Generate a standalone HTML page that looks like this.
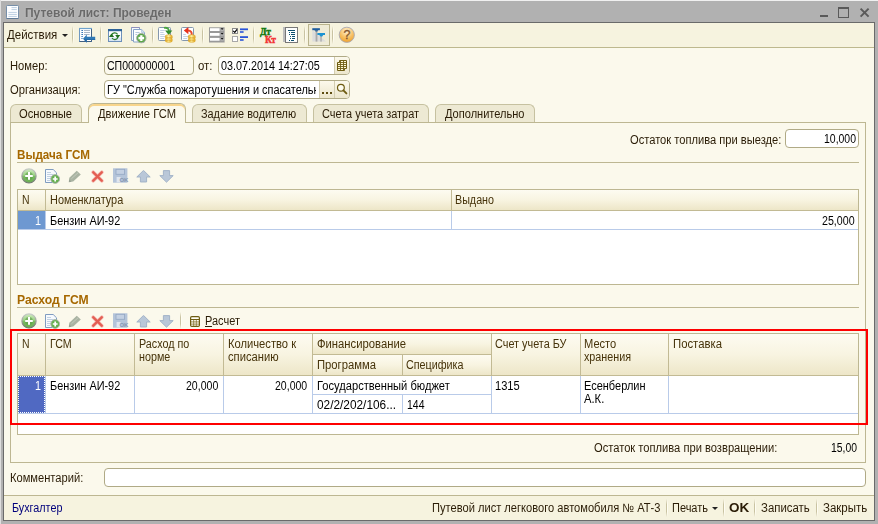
<!DOCTYPE html>
<html><head><meta charset="utf-8">
<style>
*{box-sizing:border-box;margin:0;padding:0}
html,body{width:878px;height:524px;overflow:hidden}
body{position:relative;background:#b1b1b1;font-family:"Liberation Sans",sans-serif;font-size:12px;color:#000}
.a{position:absolute}
.t{position:absolute;white-space:nowrap;line-height:14px;height:14px}
.inp{position:absolute;background:#fff;border:1px solid #b0aa86;border-radius:4px}
.tab{position:absolute;top:104px;height:18px;background:#ede9d3;border:1px solid #c6c1a0;border-bottom:none;border-radius:6px 6px 0 0}
.hd{position:absolute;background:linear-gradient(#fdfbf1 0%,#f8f4e1 50%,#ede6c8 100%)}
.hl{position:absolute;background:#c2ba94}
.bl{position:absolute;background:#b9cbe9}
.ln{position:absolute;background:#bdb792}
.vs{position:absolute;width:2px;background:linear-gradient(to right,#c9c3a2 50%,#fffdf2 50%);-webkit-mask-image:linear-gradient(transparent,#000 30%,#000 70%,transparent);mask-image:linear-gradient(transparent,#000 30%,#000 70%,transparent)}
</style></head><body>
<!-- outer frame -->
<div class="a" style="left:0;top:0;width:878px;height:1px;background:#f0f0f0"></div>
<div class="a" style="left:0;top:0;width:1px;height:524px;background:#dedede"></div>
<div class="a" style="left:3px;top:22px;width:872px;height:499px;background:#6a6a6a"></div>
<div class="a" style="left:4px;top:23px;width:870px;height:497px;background:#fbf9ec"></div>
<div class="a" style="left:4px;top:23px;width:870px;height:24px;background:#f6f3df"></div>
<div class="ln" style="left:4px;top:47px;width:870px;height:1px;background:#bdb88e"></div>
<!-- title icon -->
<svg class="a" style="left:6px;top:5px" width="13" height="14" viewBox="0 0 13 14"><rect x="0.5" y="0.5" width="12" height="13" rx="0.8" fill="#fdfeff" stroke="#7790aa"/><path d="M0.5 13.5h12" stroke="#5f7a96"/><g stroke="#bccfe2" stroke-width="1"><line x1="5.5" y1="2.6" x2="10.8" y2="2.6"/><line x1="5.5" y1="4.6" x2="10.8" y2="4.6"/><line x1="2.4" y1="7.4" x2="10.8" y2="7.4"/><line x1="2.4" y1="9.4" x2="10.8" y2="9.4"/><line x1="2.4" y1="11.4" x2="10.8" y2="11.4"/></g></svg>
<!-- window controls -->
<div class="a" style="left:820px;top:15px;width:8px;height:2px;background:#5a5a5a"></div>
<div class="a" style="left:838px;top:7px;width:11px;height:11px;border:1px solid #5a5a5a;border-top-width:2px"></div>
<svg class="a" style="left:859px;top:7px" width="11" height="11" viewBox="0 0 11 11"><path d="M1.6 1.6 L9.6 9.6 M9.6 1.6 L1.6 9.6" stroke="#5a5a5a" stroke-width="2" fill="none"/></svg>
<!-- toolbar arrow & separators -->
<div class="a" style="left:62px;top:34px;width:0;height:0;border-left:3px solid transparent;border-right:3px solid transparent;border-top:3px solid #222"></div>
<div class="vs" style="left:72px;top:26px;height:18px"></div>
<div class="vs" style="left:100px;top:26px;height:18px"></div>
<div class="vs" style="left:152px;top:26px;height:18px"></div>
<div class="vs" style="left:202px;top:26px;height:18px"></div>
<div class="vs" style="left:253px;top:26px;height:18px"></div>
<div class="vs" style="left:304px;top:26px;height:18px"></div>
<div class="vs" style="left:332px;top:26px;height:18px"></div>
<!-- inputs -->
<div class="inp" style="left:104px;top:56px;width:90px;height:19px;background:#fbf9ee"></div>
<div class="inp" style="left:218px;top:56px;width:132px;height:19px"></div>
<div class="inp" style="left:104px;top:80px;width:246px;height:19px"></div>
<!-- tabs -->
<div class="tab" style="left:10px;width:72px"></div>
<div class="tab" style="left:192px;width:115px"></div>
<div class="tab" style="left:313px;width:116px"></div>
<div class="tab" style="left:435px;width:100px"></div>
<!-- panel -->
<div class="a" style="left:10px;top:122px;width:856px;height:341px;border:1px solid #bdb792;background:#fbf9ec"></div>
<div class="tab" style="left:88px;top:103px;width:98px;height:20px;background:#fbf9ec;border-color:#bdb792;box-shadow:inset 0 2px 0 #f8d58c"></div>
<!-- ostatok input -->
<div class="inp" style="left:785px;top:129px;width:74px;height:19px"></div>
<!-- section lines -->
<div class="ln" style="left:17px;top:162px;width:842px;height:1px"></div>
<div class="ln" style="left:17px;top:307px;width:842px;height:1px"></div>
<!-- table 1 -->
<div class="a" style="left:17px;top:189px;width:842px;height:96px;background:#fff;border:1px solid #bdb792"></div>
<div class="hd" style="left:18px;top:190px;width:840px;height:20px"></div>
<div class="hl" style="left:18px;top:210px;width:840px;height:1px"></div>
<div class="hl" style="left:45px;top:190px;width:1px;height:21px"></div>
<div class="hl" style="left:451px;top:190px;width:1px;height:21px"></div>
<div class="a" style="left:18px;top:211px;width:27px;height:18px;background:#6e98d1"></div>
<div class="bl" style="left:45px;top:211px;width:1px;height:18px"></div>
<div class="bl" style="left:451px;top:211px;width:1px;height:18px"></div>
<div class="bl" style="left:18px;top:229px;width:840px;height:1px"></div>
<!-- table 2 -->
<div class="a" style="left:17px;top:333px;width:842px;height:102px;background:#fff;border:1px solid #bdb792"></div>
<div class="hd" style="left:18px;top:334px;width:840px;height:41px"></div>
<div class="hd" style="left:312px;top:334px;width:179px;height:20px"></div>
<div class="hd" style="left:312px;top:355px;width:179px;height:20px"></div>
<div class="hl" style="left:18px;top:375px;width:840px;height:1px"></div>
<div class="hl" style="left:312px;top:354px;width:180px;height:1px"></div>
<div class="hl" style="left:45px;top:334px;width:1px;height:42px"></div>
<div class="hl" style="left:134px;top:334px;width:1px;height:42px"></div>
<div class="hl" style="left:223px;top:334px;width:1px;height:42px"></div>
<div class="hl" style="left:312px;top:334px;width:1px;height:42px"></div>
<div class="hl" style="left:402px;top:355px;width:1px;height:21px"></div>
<div class="hl" style="left:491px;top:334px;width:1px;height:42px"></div>
<div class="hl" style="left:580px;top:334px;width:1px;height:42px"></div>
<div class="hl" style="left:668px;top:334px;width:1px;height:42px"></div>
<div class="bl" style="left:45px;top:376px;width:1px;height:37px"></div>
<div class="bl" style="left:134px;top:376px;width:1px;height:37px"></div>
<div class="bl" style="left:223px;top:376px;width:1px;height:37px"></div>
<div class="bl" style="left:312px;top:376px;width:1px;height:37px"></div>
<div class="bl" style="left:402px;top:395px;width:1px;height:18px"></div>
<div class="bl" style="left:491px;top:376px;width:1px;height:37px"></div>
<div class="bl" style="left:580px;top:376px;width:1px;height:37px"></div>
<div class="bl" style="left:668px;top:376px;width:1px;height:37px"></div>
<div class="bl" style="left:312px;top:394px;width:180px;height:1px"></div>
<div class="bl" style="left:18px;top:413px;width:840px;height:1px"></div>
<div class="a" style="left:18px;top:376px;width:27px;height:37px;background:#5069c2;border:1px dotted #fff"></div>
<!-- red rect -->
<div class="a" style="left:10px;top:329px;width:858px;height:96px;border:2px solid #fe0000"></div>
<!-- comment -->
<div class="inp" style="left:104px;top:468px;width:762px;height:19px"></div>
<!-- bottom bar -->
<div class="a" style="left:4px;top:496px;width:870px;height:24px;background:#f6f3df"></div>
<div class="ln" style="left:4px;top:495px;width:870px;height:1px"></div>
<div class="vs" style="left:666px;top:499px;height:18px"></div>
<div class="vs" style="left:723px;top:499px;height:18px"></div>
<div class="vs" style="left:754px;top:499px;height:18px"></div>
<div class="vs" style="left:816px;top:499px;height:18px"></div>
<div class="a" style="left:712px;top:507px;width:0;height:0;border-left:3px solid transparent;border-right:3px solid transparent;border-top:3px solid #222"></div>
<!-- toolbar icons -->
<svg class="a" style="left:78px;top:27px" width="18" height="17" viewBox="0 0 18 17">
<rect x="1.5" y="1.5" width="12" height="13" fill="#fdfeff" stroke="#6f98c2"/>
<path d="M13.5 2 V14.5 H1.5" stroke="#3f5f82" fill="none"/>
<path d="M1 1.5 H14" stroke="#6ea2cc" stroke-width="1.2"/>
<path d="M3.4 3.5h1.6M3.4 5.5h1.6M3.4 7.5h1.6M3.4 9.5h1.4M3.4 11.5h1.2" stroke="#3b78b8"/>
<path d="M6 3.5h6M6 5.5h6M6 7.5h5.6" stroke="#a9b6c6"/>
<path d="M5 11.7 L8.8 7.6 V9.8 H17.2 V13.1 H8.8 V15.8 Z" fill="#2f79b6"/>
<path d="M8.8 12.2 H17.2 V13.1 H8.8 V15.8 L5.6 12.2 Z" fill="#1f5f9c" opacity="0.7"/>
</svg>
<svg class="a" style="left:108px;top:28px" width="15" height="15" viewBox="0 0 15 15">
<rect x="0.5" y="1.5" width="13" height="12" fill="#fbfdff" stroke="#6d90ba"/>
<rect x="1" y="9.5" width="12" height="3.5" fill="#d9e6f4"/>
<rect x="0" y="1" width="14" height="2.2" fill="#2e6398"/>
<path d="M3.6 7.2 A3.3 3.3 0 0 1 9.6 6.4" stroke="#2b7d2b" stroke-width="1.2" fill="none"/>
<path d="M9.8 9.6 A3.3 3.3 0 0 1 4 10" stroke="#2b7d2b" stroke-width="1.2" fill="none"/>
<path d="M0.9 8.9 L3.5 5.4 L6.1 8.9 Z" fill="#1f701f"/>
<path d="M7.2 6.9 L12.2 6.9 L9.7 10.4 Z" fill="#1f701f"/>
</svg>
<svg class="a" style="left:130px;top:26px" width="18" height="18" viewBox="0 0 18 18">
<path d="M1.5 1.5 H9.5 V14.5 H1.5 Z" fill="#f6f9fd" stroke="#8aa0c4"/>
<path d="M1.5 1.5 H9.5" stroke="#8f8fbb"/>
<path d="M3.5 3.5 H11.6 L14.5 6.4 V16 H3.5 Z" fill="#fdfeff" stroke="#86a3c8"/>
<path d="M11.6 3.5 V6.4 H14.5" fill="#dbe7f4" stroke="#a9c0dc" stroke-width="0.8"/>
<path d="M5.4 6.5h4.2M5.4 8.5h1.6" stroke="#b4c6dc"/>
<circle cx="11.3" cy="12.1" r="4.7" fill="#58a444" stroke="#a4b0a4" stroke-width="1"/>
<circle cx="11.3" cy="12.1" r="3.2" fill="#8cc878" opacity="0.55"/>
<path d="M8.5 12.1h5.6M11.3 9.3v5.6" stroke="#fff" stroke-width="2.2"/>
</svg>
<svg class="a" style="left:157px;top:26px" width="17" height="18" viewBox="0 0 17 18">
<defs><linearGradient id="cg" x1="0" x2="1" y1="0" y2="0"><stop offset="0" stop-color="#e6ae28"/><stop offset="0.45" stop-color="#fff2a2"/><stop offset="1" stop-color="#e4a820"/></linearGradient></defs>
<rect x="1.5" y="1.5" width="12" height="13" rx="1" fill="#fdfeff" stroke="#8497ae"/>
<path d="M3.2 4.5h4.6M3.2 6.5h3.4M3.2 8.5h4.4M3.2 10.5h5M3.2 12.5h4" stroke="#c3d1e2"/>
<path d="M7 1.9 C10.6 1.3 11.9 3 11.9 5" stroke="#4aa440" stroke-width="1.9" fill="none"/>
<path d="M8.1 4.6 H15.3 L11.7 8.9 Z" fill="#2f8c2c"/>
<g fill="url(#cg)" stroke="#d9a01c" stroke-width="0.6">
<ellipse cx="11.8" cy="14.8" rx="3.5" ry="1.5"/><ellipse cx="11.8" cy="13.2" rx="3.5" ry="1.5"/><ellipse cx="11.8" cy="11.6" rx="3.5" ry="1.5"/><ellipse cx="11.8" cy="10.2" rx="3.5" ry="1.5"/></g>
</svg>
<svg class="a" style="left:180px;top:26px" width="17" height="18" viewBox="0 0 17 18">
<rect x="1.5" y="1.5" width="12" height="13" rx="1" fill="#fdfeff" stroke="#8497ae"/>
<path d="M3.2 8.5h2.6M3.2 10.5h5M3.2 12.5h4" stroke="#c3d1e2"/>
<path d="M11.6 9.6 C12.4 6.2 10.8 4.5 7.8 4.6" stroke="#ea4a2e" stroke-width="2" fill="none"/>
<path d="M8.4 0.9 V8.2 L3.8 4.5 Z" fill="#e8321c"/>
<g fill="url(#cg)" stroke="#d9a01c" stroke-width="0.6">
<ellipse cx="11.8" cy="14.8" rx="3.5" ry="1.5"/><ellipse cx="11.8" cy="13.2" rx="3.5" ry="1.5"/><ellipse cx="11.8" cy="11.6" rx="3.5" ry="1.5"/><ellipse cx="11.8" cy="10.2" rx="3.5" ry="1.5"/></g>
</svg>
<svg class="a" style="left:209px;top:27px" width="16" height="16" viewBox="0 0 16 16">
<rect x="0" y="0.3" width="15.6" height="15.2" fill="#999"/>
<g fill="#fff"><rect x="1" y="1.2" width="9.6" height="2.8"/><rect x="1" y="6" width="9.6" height="2.8"/><rect x="1" y="10.9" width="9.6" height="2.8"/></g>
<g fill="#b4b4b4"><rect x="11.4" y="1.2" width="3.4" height="2.8"/><rect x="11.4" y="6" width="3.4" height="2.8"/><rect x="11.4" y="10.9" width="3.4" height="2.8"/></g>
<path d="M11.7 1.3 h2.8 l-1.4 1.7z M11.7 6.1 h2.8 l-1.4 1.7z M11.7 11 h2.8 l-1.4 1.7z" fill="#111"/>
</svg>
<svg class="a" style="left:232px;top:28px" width="17" height="14" viewBox="0 0 17 14">
<rect x="0.5" y="0.5" width="5" height="5" fill="#fff" stroke="#8a8a8a"/>
<path d="M1.2 2.8 L2.8 4.4 L5 1.4" stroke="#000" stroke-width="1.2" fill="none"/>
<rect x="0.5" y="8.5" width="5" height="5" fill="#fff" stroke="#a8a8a8"/>
<g fill="#2a55d8"><rect x="8" y="0.4" width="8" height="1.8"/><rect x="8" y="3.2" width="3.6" height="1.6"/><rect x="8" y="8.2" width="8" height="1.8"/><rect x="8" y="11.2" width="3.6" height="1.6"/></g>
</svg>
<div class="a" style="left:260px;top:26.5px;font:bold 9.5px/10px 'Liberation Serif',serif;color:#0f780f;letter-spacing:-0.3px;-webkit-text-stroke:0.45px #0f780f">Дт</div>
<div class="a" style="left:265px;top:35px;font:bold 9.5px/10px 'Liberation Serif',serif;color:#f23434;letter-spacing:-0.5px;-webkit-text-stroke:0.45px #f23434">Кт</div>
<svg class="a" style="left:283px;top:26px" width="16" height="17" viewBox="0 0 16 17">
<rect x="0" y="1" width="3" height="15" fill="#bdbdbd"/>
<rect x="2.5" y="1.5" width="12" height="15" fill="#fdfefe" stroke="#777"/>
<path d="M5 4.5h7M6 6.5h1M8 6.5h4M6 8.5h1M8 8.5h4M7 10.5h1M9 10.5h3M7 12.5h1M9 12.5h3M6 14.5h1M8 14.5h3" stroke="#0d4f6e" stroke-width="1.1"/>
</svg>
<div class="a" style="left:308px;top:24px;width:22px;height:22px;background:#efebd7;border:1px solid #b9b38d"></div>
<svg class="a" style="left:311px;top:27px" width="16" height="16" viewBox="0 0 16 16">
<path d="M1.3 3 L15 14.6 H1.3 Z" fill="#dcdcdc"/>
<rect x="4.6" y="3" width="1.8" height="11.6" fill="#a9a9a9"/>
<rect x="9.2" y="8" width="1.7" height="6.6" fill="#b5b5b5"/>
<rect x="1.3" y="1.2" width="7.6" height="2" fill="#1e5c9e"/>
<path d="M3.3 3.2h4l-1 1.4h-1.7z" fill="#1e5c9e"/>
<rect x="6.4" y="6" width="7.6" height="2" fill="#1c92d2"/>
<path d="M8.2 8h4l-1 1.4h-1.7z" fill="#1c92d2"/>
</svg>
<svg class="a" style="left:338px;top:26px" width="18" height="18" viewBox="0 0 18 18">
<defs><radialGradient id="hg" cx="0.5" cy="0.25" r="0.8"><stop offset="0" stop-color="#fff3d6"/><stop offset="0.55" stop-color="#f7c064"/><stop offset="1" stop-color="#ee9c22"/></radialGradient></defs>
<circle cx="8.8" cy="8.8" r="7.6" fill="url(#hg)" stroke="#a9a9b4" stroke-width="0.9"/>
<text x="8.9" y="13.2" text-anchor="middle" font-family="Liberation Sans" font-size="12.5" fill="#86552a" stroke="#86552a" stroke-width="0.3">?</text>
</svg>
<!-- calendar / ... / search buttons -->
<div class="a" style="left:334px;top:57px;width:15px;height:17px;background:linear-gradient(#fcf9ec,#ece6cd);border-left:1px solid #d3cdb0;border-radius:0 3px 3px 0"></div>
<svg class="a" style="left:337px;top:60px" width="10" height="11" viewBox="0 0 10 11">
<path d="M2.5 0.5h7v8h-2v2h-7v-8h2z" fill="#fff8d8" stroke="#6e5c12"/>
<path d="M0.5 4.5h9M0.5 6.5h9M0.5 8.5h7M2.5 2.5h7M3.5 0.5v10M6.5 0.5v10" stroke="#6e5c12" stroke-width="0.9"/>
</svg>
<div class="a" style="left:319px;top:81px;width:30px;height:17px;background:linear-gradient(#fcf9ec,#ece6cd);border-left:1px solid #d3cdb0;border-radius:0 3px 3px 0"></div>
<div class="a" style="left:334px;top:81px;width:1px;height:17px;background:#d3cdb0"></div>
<div class="a" style="left:322px;top:92px;width:2px;height:2px;background:#5d4c10;box-shadow:4px 0 0 #5d4c10,8px 0 0 #5d4c10"></div>
<svg class="a" style="left:336px;top:83px" width="13" height="13" viewBox="0 0 13 13">
<circle cx="4.9" cy="4.8" r="3.4" fill="#fffdf0" stroke="#6e5c12" stroke-width="1.2"/>
<path d="M7.4 7.4 L10.4 10.4" stroke="#6e5c12" stroke-width="1.9" stroke-linecap="round"/>
</svg>

<svg class="a" style="left:21px;top:168px" width="16" height="16" viewBox="0 0 16 16">
<defs><linearGradient id="gg0" x1="0" y1="0" x2="0" y2="1"><stop offset="0" stop-color="#d2edc3"/><stop offset="0.45" stop-color="#9bd085"/><stop offset="0.55" stop-color="#7aba62"/><stop offset="1" stop-color="#69ad52"/></linearGradient><linearGradient id="gs0" x1="0" y1="0" x2="0" y2="1"><stop offset="0" stop-color="#c9cdc9"/><stop offset="1" stop-color="#6f746f"/></linearGradient></defs>
<circle cx="8" cy="7.9" r="7.1" fill="url(#gg0)" stroke="url(#gs0)" stroke-width="1.2"/>
<circle cx="8" cy="7.9" r="3.9" fill="#5c9f44" opacity="0.6"/>
<path d="M4.2 7.9h7.6M8 4.1v7.6" stroke="#fff" stroke-width="2"/>
</svg>
<svg class="a" style="left:44px;top:169px" width="17" height="15" viewBox="0 0 17 15">
<path d="M1.5 0.5 H9.2 L12.5 3.8 V13.5 H1.5 Z" fill="#f7fafd" stroke="#7f9cc0"/>
<path d="M3 3.5h4M3 5.5h6M3 7.5h5M3 9.5h4M3 11.5h3" stroke="#c0d0e2"/>
<circle cx="11.2" cy="10" r="4.4" fill="#66b050" stroke="#adb6ad" stroke-width="1"/>
<path d="M8.8 10h4.8M11.2 7.6v4.8" stroke="#fff" stroke-width="1.7"/>
</svg>
<svg class="a" style="left:68px;top:170px" width="14" height="13" viewBox="0 0 14 13">
<path d="M1 12 L1.3 7.8 L8.8 0.8 L12.8 4.6 L5.2 11.6 Z" fill="#a9b3a2"/>
<path d="M3.4 8.8 L10 2.8" stroke="#c3cbbd" stroke-width="1"/><path d="M0.8 12.2 L1.1 9.2 L3.6 11.8 Z" fill="#98a294"/>
</svg>
<svg class="a" style="left:91px;top:170px" width="13" height="13" viewBox="0 0 13 13">
<path d="M2.2 2.2 L10.8 10.8 M10.8 2.2 L2.2 10.8" stroke="#f3b4ac" stroke-width="3.6" stroke-linecap="round"/>
<path d="M2.2 2.2 L10.8 10.8 M10.8 2.2 L2.2 10.8" stroke="#e35e52" stroke-width="2.3" stroke-linecap="round"/>
</svg>
<svg class="a" style="left:113px;top:168px" width="16" height="15" viewBox="0 0 16 15">
<rect x="0" y="0.3" width="14.4" height="14.4" fill="#b4c4d9"/>
<rect x="3" y="1.3" width="8.6" height="5" fill="#c3d0e2" stroke="#93a7c4" stroke-width="0.8"/>
<rect x="3.6" y="9" width="4" height="5.4" fill="#dfe6ef"/>
<text x="6.6" y="14.2" font-family="Liberation Sans" font-weight="bold" font-size="6" fill="#8798b2" letter-spacing="-0.3">OK</text>
</svg>
<svg class="a" style="left:136px;top:170px" width="15" height="13" viewBox="0 0 15 13">
<path d="M7.5 0.4 L14.2 7 H10.6 V12 H4.4 V7 H0.8 Z" fill="#b9c7d8" stroke="#9dafc5" stroke-width="0.9"/>
</svg>
<svg class="a" style="left:159px;top:170px" width="15" height="13" viewBox="0 0 15 13">
<path d="M7.5 12.2 L14.2 5.6 H10.6 V0.6 H4.4 V5.6 H0.8 Z" fill="#b9c7d8" stroke="#9dafc5" stroke-width="0.9"/>
</svg>

<svg class="a" style="left:21px;top:313px" width="16" height="16" viewBox="0 0 16 16">
<defs><linearGradient id="gg145" x1="0" y1="0" x2="0" y2="1"><stop offset="0" stop-color="#d2edc3"/><stop offset="0.45" stop-color="#9bd085"/><stop offset="0.55" stop-color="#7aba62"/><stop offset="1" stop-color="#69ad52"/></linearGradient><linearGradient id="gs145" x1="0" y1="0" x2="0" y2="1"><stop offset="0" stop-color="#c9cdc9"/><stop offset="1" stop-color="#6f746f"/></linearGradient></defs>
<circle cx="8" cy="7.9" r="7.1" fill="url(#gg145)" stroke="url(#gs145)" stroke-width="1.2"/>
<circle cx="8" cy="7.9" r="3.9" fill="#5c9f44" opacity="0.6"/>
<path d="M4.2 7.9h7.6M8 4.1v7.6" stroke="#fff" stroke-width="2"/>
</svg>
<svg class="a" style="left:44px;top:314px" width="17" height="15" viewBox="0 0 17 15">
<path d="M1.5 0.5 H9.2 L12.5 3.8 V13.5 H1.5 Z" fill="#f7fafd" stroke="#7f9cc0"/>
<path d="M3 3.5h4M3 5.5h6M3 7.5h5M3 9.5h4M3 11.5h3" stroke="#c0d0e2"/>
<circle cx="11.2" cy="10" r="4.4" fill="#66b050" stroke="#adb6ad" stroke-width="1"/>
<path d="M8.8 10h4.8M11.2 7.6v4.8" stroke="#fff" stroke-width="1.7"/>
</svg>
<svg class="a" style="left:68px;top:315px" width="14" height="13" viewBox="0 0 14 13">
<path d="M1 12 L1.3 7.8 L8.8 0.8 L12.8 4.6 L5.2 11.6 Z" fill="#a9b3a2"/>
<path d="M3.4 8.8 L10 2.8" stroke="#c3cbbd" stroke-width="1"/><path d="M0.8 12.2 L1.1 9.2 L3.6 11.8 Z" fill="#98a294"/>
</svg>
<svg class="a" style="left:91px;top:315px" width="13" height="13" viewBox="0 0 13 13">
<path d="M2.2 2.2 L10.8 10.8 M10.8 2.2 L2.2 10.8" stroke="#f3b4ac" stroke-width="3.6" stroke-linecap="round"/>
<path d="M2.2 2.2 L10.8 10.8 M10.8 2.2 L2.2 10.8" stroke="#e35e52" stroke-width="2.3" stroke-linecap="round"/>
</svg>
<svg class="a" style="left:113px;top:313px" width="16" height="15" viewBox="0 0 16 15">
<rect x="0" y="0.3" width="14.4" height="14.4" fill="#b4c4d9"/>
<rect x="3" y="1.3" width="8.6" height="5" fill="#c3d0e2" stroke="#93a7c4" stroke-width="0.8"/>
<rect x="3.6" y="9" width="4" height="5.4" fill="#dfe6ef"/>
<text x="6.6" y="14.2" font-family="Liberation Sans" font-weight="bold" font-size="6" fill="#8798b2" letter-spacing="-0.3">OK</text>
</svg>
<svg class="a" style="left:136px;top:315px" width="15" height="13" viewBox="0 0 15 13">
<path d="M7.5 0.4 L14.2 7 H10.6 V12 H4.4 V7 H0.8 Z" fill="#b9c7d8" stroke="#9dafc5" stroke-width="0.9"/>
</svg>
<svg class="a" style="left:159px;top:315px" width="15" height="13" viewBox="0 0 15 13">
<path d="M7.5 12.2 L14.2 5.6 H10.6 V0.6 H4.4 V5.6 H0.8 Z" fill="#b9c7d8" stroke="#9dafc5" stroke-width="0.9"/>
</svg>
<div class="vs" style="left:180px;top:312px;height:17px"></div>
<svg class="a" style="left:190px;top:316px" width="10" height="11" viewBox="0 0 10 11"><rect x="0.6" y="0.6" width="8.8" height="9.8" rx="1.2" fill="#fffef6" stroke="#6e5c12" stroke-width="1.2"/><path d="M1 3.5h8" stroke="#6e5c12" stroke-width="1"/><path d="M1 5.9h8M1 8.1h8M3.7 3.5v7M6.3 3.5v7" stroke="#7d6b22" stroke-width="0.75"/></svg>
<!-- texts -->
<div class="t" style="left:24.95px;top:6.00px;font-weight:bold;color:#6a6a6a;text-shadow:0 0 2px #c8c8c8;"><span style="display:inline-block;transform-origin:0 0;transform:scaleX(0.9976);letter-spacing:0.00px;">Путевой лист: Проведен</span></div>
<div class="t" style="left:7.45px;top:28.00px;color:#2a1c06;"><span style="display:inline-block;transform-origin:0 0;transform:scaleX(0.9558);letter-spacing:0.00px;">Действия</span></div>
<div class="t" style="left:9.70px;top:59.00px;color:#2a1c06;"><span style="display:inline-block;transform-origin:0 0;transform:scaleX(0.9312);letter-spacing:0.00px;">Номер:</span></div>
<div class="t" style="left:107.00px;top:59.00px;"><span style="display:inline-block;transform-origin:0 0;transform:scaleX(0.8791);letter-spacing:0.00px;">СП000000001</span></div>
<div class="t" style="left:198.20px;top:59.00px;color:#2a1c06;"><span style="display:inline-block;transform-origin:0 0;transform:scaleX(0.9514);letter-spacing:0.00px;">от:</span></div>
<div class="t" style="left:220.90px;top:59.00px;"><span style="display:inline-block;transform-origin:0 0;transform:scaleX(0.8973);letter-spacing:0.00px;">03.07.2014 14:27:05</span></div>
<div class="t" style="left:9.70px;top:83.00px;color:#2a1c06;"><span style="display:inline-block;transform-origin:0 0;transform:scaleX(0.9325);letter-spacing:0.00px;">Организация:</span></div>
<div class="t" style="left:106.70px;top:83.00px;width:209.80px;overflow:hidden;"><span style="display:inline-block;transform-origin:0 0;transform:scaleX(0.9107);letter-spacing:0.00px;">ГУ &quot;Служба пожаротушения и спасательн</span></div>
<div class="t" style="left:18.60px;top:107.00px;color:#2a1c06;"><span style="display:inline-block;transform-origin:0 0;transform:scaleX(0.9326);letter-spacing:0.00px;">Основные</span></div>
<div class="t" style="left:98.10px;top:107.00px;color:#2a1c06;"><span style="display:inline-block;transform-origin:0 0;transform:scaleX(0.9316);letter-spacing:0.00px;">Движение ГСМ</span></div>
<div class="t" style="left:201.40px;top:107.00px;color:#2a1c06;"><span style="display:inline-block;transform-origin:0 0;transform:scaleX(0.9063);letter-spacing:0.00px;">Задание водителю</span></div>
<div class="t" style="left:322.20px;top:107.00px;color:#2a1c06;"><span style="display:inline-block;transform-origin:0 0;transform:scaleX(0.9124);letter-spacing:0.00px;">Счета учета затрат</span></div>
<div class="t" style="left:445.40px;top:107.00px;color:#2a1c06;"><span style="display:inline-block;transform-origin:0 0;transform:scaleX(0.9205);letter-spacing:0.00px;">Дополнительно</span></div>
<div class="t" style="left:630.00px;top:133.00px;color:#2a1c06;"><span style="display:inline-block;transform-origin:0 0;transform:scaleX(0.9278);letter-spacing:0.00px;">Остаток топлива при выезде:</span></div>
<div class="t" style="left:823.50px;top:132.00px;"><span style="display:inline-block;transform-origin:0 0;transform:scaleX(0.8719);letter-spacing:0.00px;">10,000</span></div>
<div class="t" style="left:16.70px;top:148.00px;font-weight:bold;color:#a66800;"><span style="display:inline-block;transform-origin:0 0;transform:scaleX(0.9730);letter-spacing:0.00px;">Выдача ГСМ</span></div>
<div class="t" style="left:21.90px;top:193.00px;color:#46330a;"><span style="display:inline-block;transform-origin:0 0;transform:scaleX(0.8700);letter-spacing:0.00px;">N</span></div>
<div class="t" style="left:49.95px;top:193.00px;color:#46330a;"><span style="display:inline-block;transform-origin:0 0;transform:scaleX(0.9096);letter-spacing:0.00px;">Номенклатура</span></div>
<div class="t" style="left:455.45px;top:193.00px;color:#46330a;"><span style="display:inline-block;transform-origin:0 0;transform:scaleX(0.8944);letter-spacing:0.00px;">Выдано</span></div>
<div class="t" style="left:35.10px;top:214.00px;color:#fff;"><span style="display:inline-block;transform-origin:0 0;transform:scaleX(0.9000);letter-spacing:0.00px;">1</span></div>
<div class="t" style="left:49.95px;top:214.00px;"><span style="display:inline-block;transform-origin:0 0;transform:scaleX(0.9086);letter-spacing:0.00px;">Бензин АИ-92</span></div>
<div class="t" style="left:822.40px;top:214.00px;"><span style="display:inline-block;transform-origin:0 0;transform:scaleX(0.8882);letter-spacing:0.00px;">25,000</span></div>
<div class="t" style="left:16.70px;top:293.00px;font-weight:bold;color:#a66800;"><span style="display:inline-block;transform-origin:0 0;transform:scaleX(1.0144);letter-spacing:0.00px;">Расход ГСМ</span></div>
<div class="t" style="left:204.70px;top:314.00px;color:#2a1c06;"><span style="display:inline-block;transform-origin:0 0;transform:scaleX(0.9144);letter-spacing:0.00px;"><u>Р</u>асчет</span></div>
<div class="t" style="left:21.90px;top:337.00px;color:#46330a;"><span style="display:inline-block;transform-origin:0 0;transform:scaleX(0.8700);letter-spacing:0.00px;">N</span></div>
<div class="t" style="left:49.95px;top:337.00px;color:#46330a;"><span style="display:inline-block;transform-origin:0 0;transform:scaleX(0.8883);letter-spacing:0.00px;">ГСМ</span></div>
<div class="t" style="left:139.20px;top:337.00px;color:#46330a;"><span style="display:inline-block;transform-origin:0 0;transform:scaleX(0.8963);letter-spacing:0.00px;">Расход по</span></div>
<div class="t" style="left:139.20px;top:350.00px;color:#46330a;"><span style="display:inline-block;transform-origin:0 0;transform:scaleX(0.8963);letter-spacing:0.00px;">норме</span></div>
<div class="t" style="left:227.60px;top:337.00px;color:#46330a;"><span style="display:inline-block;transform-origin:0 0;transform:scaleX(0.9326);letter-spacing:0.00px;">Количество к</span></div>
<div class="t" style="left:227.60px;top:350.00px;color:#46330a;"><span style="display:inline-block;transform-origin:0 0;transform:scaleX(0.9326);letter-spacing:0.00px;">списанию</span></div>
<div class="t" style="left:316.70px;top:337.00px;color:#46330a;"><span style="display:inline-block;transform-origin:0 0;transform:scaleX(0.9396);letter-spacing:0.00px;">Финансирование</span></div>
<div class="t" style="left:316.70px;top:358.00px;color:#46330a;"><span style="display:inline-block;transform-origin:0 0;transform:scaleX(0.9384);letter-spacing:0.00px;">Программа</span></div>
<div class="t" style="left:406.20px;top:358.00px;color:#46330a;"><span style="display:inline-block;transform-origin:0 0;transform:scaleX(0.8959);letter-spacing:0.00px;">Специфика</span></div>
<div class="t" style="left:495.45px;top:337.00px;color:#46330a;"><span style="display:inline-block;transform-origin:0 0;transform:scaleX(0.9050);letter-spacing:0.00px;">Счет учета БУ</span></div>
<div class="t" style="left:584.20px;top:337.00px;color:#46330a;"><span style="display:inline-block;transform-origin:0 0;transform:scaleX(0.9257);letter-spacing:0.00px;">Место</span></div>
<div class="t" style="left:584.20px;top:350.00px;color:#46330a;"><span style="display:inline-block;transform-origin:0 0;transform:scaleX(0.8956);letter-spacing:0.00px;">хранения</span></div>
<div class="t" style="left:673.45px;top:337.00px;color:#46330a;"><span style="display:inline-block;transform-origin:0 0;transform:scaleX(0.9442);letter-spacing:0.00px;">Поставка</span></div>
<div class="t" style="left:35.10px;top:379.00px;color:#fff;"><span style="display:inline-block;transform-origin:0 0;transform:scaleX(0.9000);letter-spacing:0.00px;">1</span></div>
<div class="t" style="left:49.95px;top:379.00px;"><span style="display:inline-block;transform-origin:0 0;transform:scaleX(0.9086);letter-spacing:0.00px;">Бензин АИ-92</span></div>
<div class="t" style="left:186.20px;top:379.00px;"><span style="display:inline-block;transform-origin:0 0;transform:scaleX(0.8800);letter-spacing:0.00px;">20,000</span></div>
<div class="t" style="left:275.00px;top:379.00px;"><span style="display:inline-block;transform-origin:0 0;transform:scaleX(0.8773);letter-spacing:0.00px;">20,000</span></div>
<div class="t" style="left:316.70px;top:379.00px;"><span style="display:inline-block;transform-origin:0 0;transform:scaleX(0.9280);letter-spacing:0.00px;">Государственный бюджет</span></div>
<div class="t" style="left:316.70px;top:398.00px;"><span style="display:inline-block;transform-origin:0 0;transform:scaleX(0.9867);letter-spacing:0.00px;">02/2/202/106...</span></div>
<div class="t" style="left:406.50px;top:398.00px;"><span style="display:inline-block;transform-origin:0 0;transform:scaleX(0.8741);letter-spacing:0.00px;">144</span></div>
<div class="t" style="left:495.45px;top:379.00px;"><span style="display:inline-block;transform-origin:0 0;transform:scaleX(0.9271);letter-spacing:0.00px;">1315</span></div>
<div class="t" style="left:584.20px;top:379.00px;"><span style="display:inline-block;transform-origin:0 0;transform:scaleX(0.9155);letter-spacing:0.00px;">Есенберлин</span></div>
<div class="t" style="left:584.20px;top:392.00px;"><span style="display:inline-block;transform-origin:0 0;transform:scaleX(0.9348);letter-spacing:0.00px;">А.К.</span></div>
<div class="t" style="left:593.70px;top:441.00px;color:#2a1c06;"><span style="display:inline-block;transform-origin:0 0;transform:scaleX(0.9292);letter-spacing:0.00px;">Остаток топлива при возвращении:</span></div>
<div class="t" style="left:830.50px;top:441.00px;"><span style="display:inline-block;transform-origin:0 0;transform:scaleX(0.8658);letter-spacing:0.00px;">15,00</span></div>
<div class="t" style="left:10.00px;top:471.00px;color:#2a1c06;"><span style="display:inline-block;transform-origin:0 0;transform:scaleX(0.9289);letter-spacing:0.00px;">Комментарий:</span></div>
<div class="t" style="left:12.10px;top:501.00px;color:#00007c;"><span style="display:inline-block;transform-origin:0 0;transform:scaleX(0.8982);letter-spacing:0.00px;">Бухгалтер</span></div>
<div class="t" style="left:432.20px;top:501.00px;color:#2a1c06;"><span style="display:inline-block;transform-origin:0 0;transform:scaleX(0.9261);letter-spacing:0.00px;">Путевой лист легкового автомобиля № АТ-3</span></div>
<div class="t" style="left:672.20px;top:501.00px;color:#2a1c06;"><span style="display:inline-block;transform-origin:0 0;transform:scaleX(0.9158);letter-spacing:0.00px;">Печать</span></div>
<div class="t" style="left:729.20px;top:501.00px;font-weight:bold;color:#2a1c06;font-size:13px;"><span style="display:inline-block;transform-origin:0 0;transform:scaleX(1.0385);letter-spacing:0.00px;">OK</span></div>
<div class="t" style="left:760.95px;top:501.00px;color:#2a1c06;"><span style="display:inline-block;transform-origin:0 0;transform:scaleX(0.9506);letter-spacing:0.00px;">Записать</span></div>
<div class="t" style="left:823.20px;top:501.00px;color:#2a1c06;"><span style="display:inline-block;transform-origin:0 0;transform:scaleX(0.9563);letter-spacing:0.00px;">Закрыть</span></div>
</body></html>
